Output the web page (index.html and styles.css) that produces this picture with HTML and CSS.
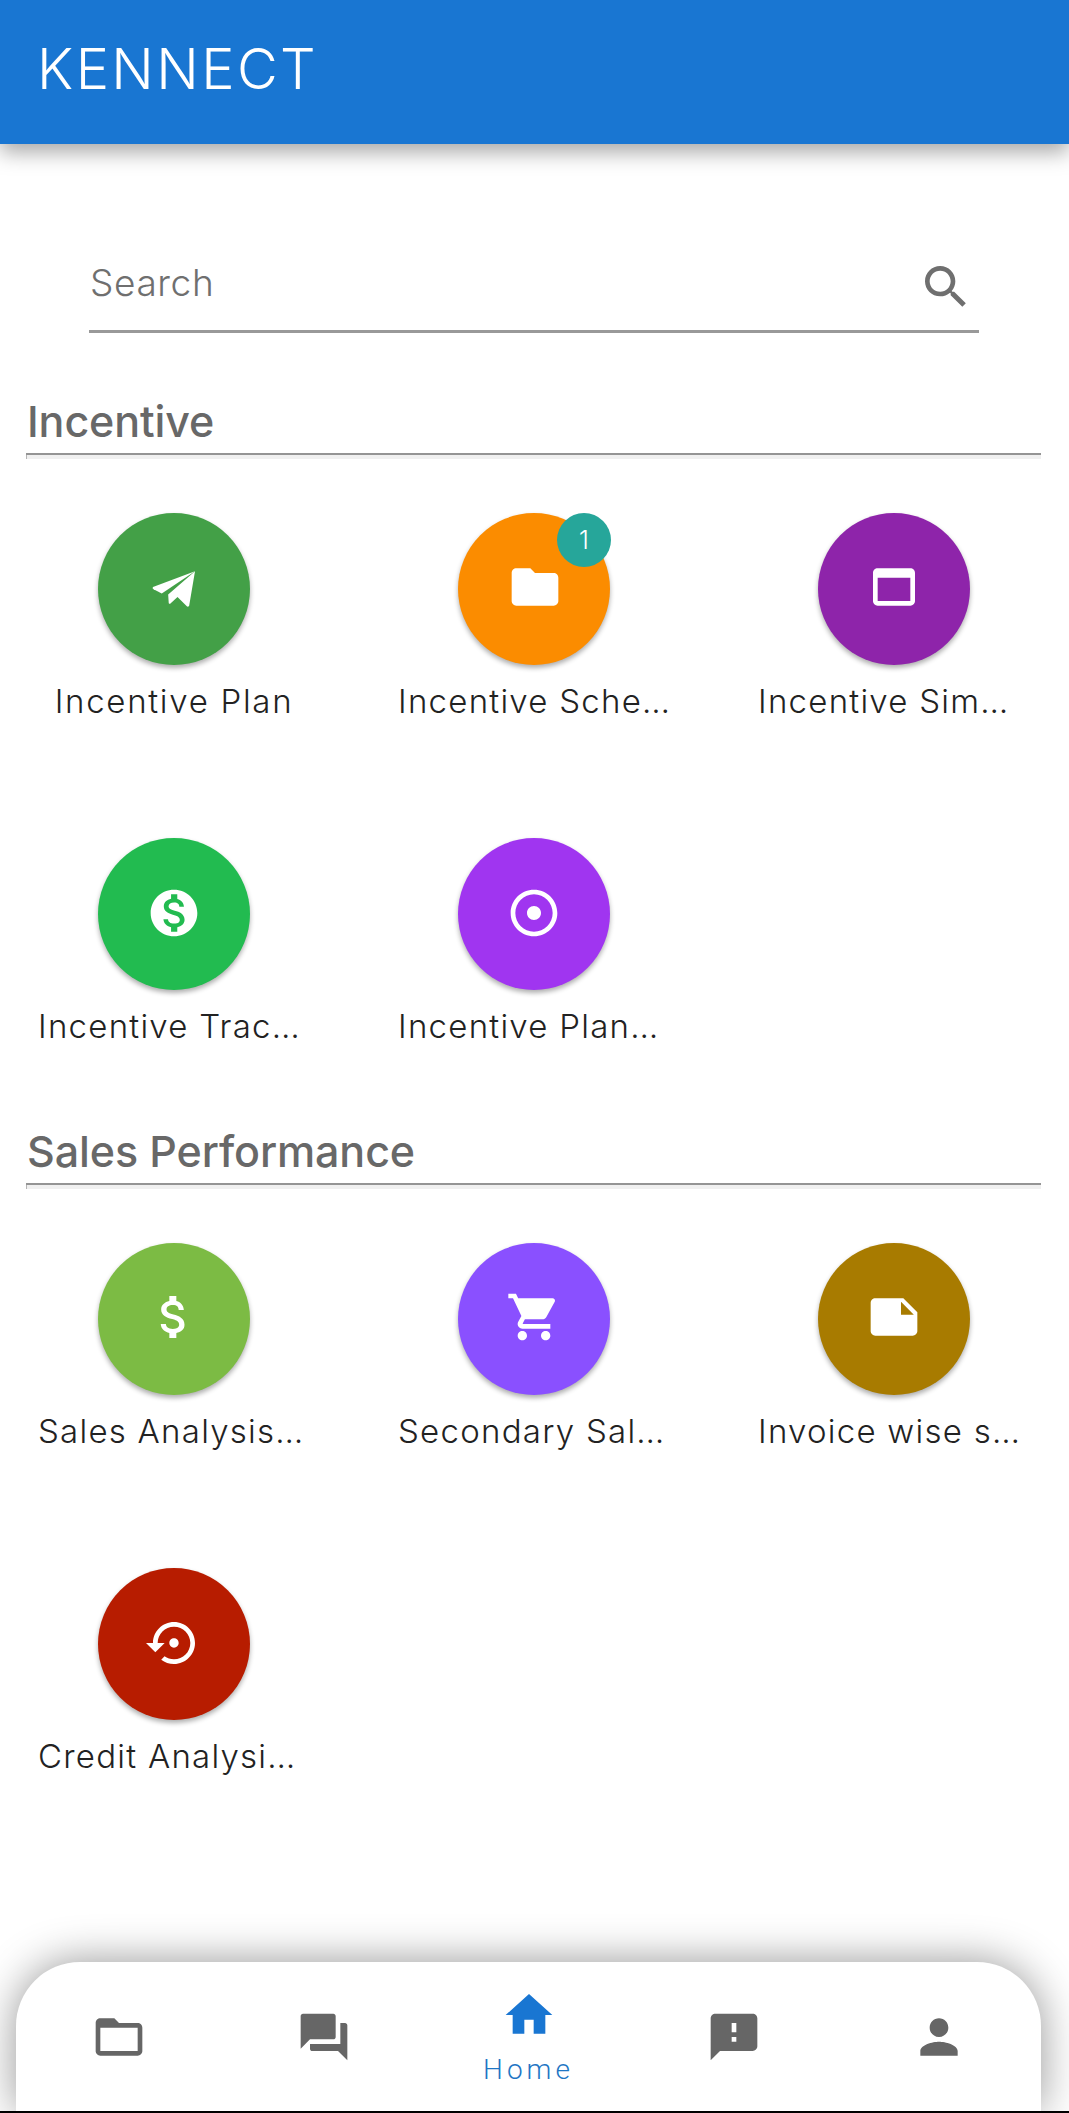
FILE: index.html
```html
<!DOCTYPE html>
<html lang="en">
<head>
<meta charset="utf-8">
<title>KENNECT</title>
<link rel="stylesheet" href="styles.css">
</head>
<body>
<header class="appbar"><h1 class="brand">KENNECT</h1></header>
<main class="content">
  <div class="search">
    <span class="search-text">Search</span>
    <svg class="search-icon" viewBox="0 0 24 24"><path d="M15.5 14h-.79l-.28-.27C15.41 12.59 16 11.11 16 9.5 16 5.91 13.09 3 9.5 3S3 5.91 3 9.5 5.91 16 9.5 16c1.61 0 3.09-.59 4.23-1.57l.27.28v.79l5 4.99L20.49 19l-4.99-5zm-6 0C7.01 14 5 11.99 5 9.5S7.01 5 9.5 5 14 7.01 14 9.5 11.99 14 9.5 14z"/></svg>
  </div>

  <section class="section">
    <h2 class="section-title">Incentive</h2>
    <div class="grid">
      <div class="tile">
        <div class="disc c-green"><svg class="glyph" viewBox="0 0 48 48"><path d="M42 10.500 6 24Q5 25 6.500 26L13.500 29.500Z"/><path d="M42 10.500 37 40Q36 41.500 35 40.500L27 32.500 20.500 38.500 19.500 38 19 30.500Z"/></svg></div>
        <div class="label label-center">Incentive Plan</div>
      </div>
      <div class="tile">
        <div class="disc c-orange"><svg class="glyph glyph-nudge" viewBox="0 0 24 24"><path d="M10 4H4c-1.1 0-1.99.9-1.99 2L2 18c0 1.1.9 2 2 2h16c1.1 0 2-.9 2-2V8c0-1.1-.9-2-2-2h-8l-2-2z"/></svg><span class="badge">1</span></div>
        <div class="label">Incentive Sche…</div>
      </div>
      <div class="tile">
        <div class="disc c-purple"><svg class="glyph" viewBox="0 0 24 24"><path d="M19 4H5c-1.11 0-2 .9-2 2v12c0 1.1.89 2 2 2h14c1.1 0 2-.9 2-2V6c0-1.1-.89-2-2-2zm0 14H5V8h14v10z"/></svg></div>
        <div class="label">Incentive Sim…</div>
      </div>
      <div class="tile">
        <div class="disc c-emerald"><svg class="glyph" viewBox="0 0 24 24"><path d="M12 2C6.48 2 2 6.48 2 12s4.48 10 10 10 10-4.48 10-10S17.52 2 12 2zm1.41 16.09V20h-2.67v-1.93c-1.71-.36-3.16-1.46-3.27-3.4h1.96c.1 1.05.82 1.87 2.65 1.87 1.96 0 2.4-.98 2.4-1.59 0-.83-.44-1.61-2.67-2.14-2.48-.6-4.18-1.62-4.18-3.67 0-1.72 1.39-2.84 3.11-3.21V4h2.67v1.95c1.86.45 2.79 1.86 2.85 3.39H14.3c-.05-1.11-.64-1.87-2.22-1.87-1.5 0-2.4.68-2.4 1.64 0 .84.65 1.39 2.67 1.91s4.18 1.39 4.18 3.91c-.01 1.83-1.38 2.83-3.12 3.16z"/></svg></div>
        <div class="label">Incentive Trac…</div>
      </div>
      <div class="tile">
        <div class="disc c-violet"><svg class="glyph" viewBox="0 0 24 24"><path d="M12 2C6.49 2 2 6.49 2 12s4.49 10 10 10 10-4.49 10-10S17.51 2 12 2zm0 18c-4.41 0-8-3.59-8-8s3.59-8 8-8 8 3.59 8 8-3.59 8-8 8zm3-8c0 1.66-1.34 3-3 3s-3-1.34-3-3 1.34-3 3-3 3 1.34 3 3z"/></svg></div>
        <div class="label">Incentive Plan…</div>
      </div>
    </div>
  </section>

  <section class="section">
    <h2 class="section-title">Sales Performance</h2>
    <div class="grid">
      <div class="tile">
        <div class="disc c-lime"><svg class="glyph" viewBox="0 0 24 24"><path d="M11.8 10.9c-2.27-.59-3-1.2-3-2.15 0-1.09 1.01-1.85 2.7-1.85 1.78 0 2.44.85 2.5 2.1h2.21c-.07-1.72-1.12-3.3-3.21-3.81V3h-3v2.16c-1.94.42-3.5 1.68-3.5 3.61 0 2.31 1.91 3.46 4.7 4.13 2.5.6 3 1.48 3 2.41 0 .69-.49 1.79-2.7 1.79-2.06 0-2.87-.92-2.98-2.1h-2.2c.12 2.19 1.76 3.42 3.68 3.83V21h3v-2.15c1.95-.37 3.5-1.5 3.5-3.55 0-2.84-2.43-3.81-4.7-4.4z"/></svg></div>
        <div class="label">Sales Analysis…</div>
      </div>
      <div class="tile">
        <div class="disc c-indigo"><svg class="glyph" viewBox="0 0 24 24"><path d="M7 18c-1.1 0-1.99.9-1.99 2S5.9 22 7 22s2-.9 2-2-.9-2-2-2zM1 2v2h2l3.6 7.59-1.35 2.45c-.16.28-.25.61-.25.96 0 1.1.9 2 2 2h12v-2H7.42c-.14 0-.25-.11-.25-.25l.03-.12.9-1.63h7.45c.75 0 1.41-.41 1.75-1.03l3.58-6.49c.08-.14.12-.31.12-.48 0-.55-.45-1-1-1H5.21l-.94-2H1zm16 16c-1.1 0-1.99.9-1.99 2s.89 2 1.99 2 2-.9 2-2-.9-2-2-2z"/></svg></div>
        <div class="label">Secondary Sal…</div>
      </div>
      <div class="tile">
        <div class="disc c-gold"><svg class="glyph" viewBox="0 0 24 24"><path d="M22 10l-6-6H4c-1.1 0-2 .9-2 2v12.01c0 1.1.9 1.99 2 1.99l16-.01c1.1 0 2-.89 2-1.99v-8zm-7-4.5l5.5 5.5H15V5.5z"/></svg></div>
        <div class="label">Invoice wise s…</div>
      </div>
      <div class="tile">
        <div class="disc c-red"><svg class="glyph" viewBox="0 0 24 24"><path d="M14 12c0-1.1-.9-2-2-2s-2 .9-2 2 .9 2 2 2 2-.9 2-2zm-2-9c-4.97 0-9 4.03-9 9H0l4 4 4-4H5c0-3.87 3.13-7 7-7s7 3.13 7 7-3.13 7-7 7c-1.51 0-2.91-.49-4.06-1.3l-1.42 1.44C8.04 20.3 9.94 21 12 21c4.97 0 9-4.03 9-9s-4.03-9-9-9z"/></svg></div>
        <div class="label">Credit Analysi…</div>
      </div>
    </div>
  </section>
</main>
<nav class="tabbar">
  <div class="tab"><svg class="tab-icon" viewBox="0 0 24 24"><path d="M20 6h-8l-2-2H4c-1.1 0-1.99.9-1.99 2L2 18c0 1.1.9 2 2 2h16c1.1 0 2-.9 2-2V8c0-1.1-.9-2-2-2zm0 12H4V8h16v10z"/></svg></div>
  <div class="tab"><svg class="tab-icon" viewBox="0 0 24 24"><path d="M21 6h-2v9H6v2c0 .55.45 1 1 1h11l4 4V7c0-.55-.45-1-1-1zm-4 6V3c0-.55-.45-1-1-1H3c-.55 0-1 .45-1 1v14l4-4h10c.55 0 1-.45 1-1z"/></svg></div>
  <div class="tab tab-active"><svg class="tab-icon" viewBox="0 0 24 24"><path d="M10 20v-6h4v6h5v-8h3L12 3 2 12h3v8z"/></svg><span class="tab-label">Home</span></div>
  <div class="tab"><svg class="tab-icon" viewBox="0 0 24 24"><path d="M20 2H4c-1.1 0-1.99.9-1.99 2L2 22l4-4h14c1.1 0 2-.9 2-2V4c0-1.1-.9-2-2-2zm-7 12h-2v-2h2v2zm0-4h-2V6h2v4z"/></svg></div>
  <div class="tab"><svg class="tab-icon" viewBox="0 0 24 24"><path d="M12 12c2.21 0 4-1.79 4-4s-1.79-4-4-4-4 1.79-4 4 1.79 4 4 4zm0 2c-2.67 0-8 1.34-8 4v2h16v-2c0-2.66-5.33-4-8-4z"/></svg></div>
</nav>
<div class="edge"></div>
</body>
</html>
```
FILE: styles.css
```css
* { box-sizing: border-box; }
html, body { margin: 0; padding: 0; }
body {
  width: 1069px;
  height: 2113px;
  overflow: hidden;
  display: flex;
  flex-direction: column;
  background: #fff;
  font-family: "Inter", "Liberation Sans", sans-serif;
}
.appbar {
  height: 144px;
  flex: none;
  background: #1976d2;
  box-shadow: 0 8px 20px rgba(0,0,0,.35);
  display: flex;
  align-items: center;
  padding: 0 0 7px 37px;
  position: relative;
  z-index: 2;
}
.brand {
  margin: 0;
  font-size: 56px;
  font-weight: 300;
  color: #fff;
  line-height: 1;
  letter-spacing: 2.4px;
}
.content { flex: 1; min-height: 0; }
.search {
  margin: 104px 90px 37px 89px;
  height: 85px;
  border-bottom: 3px solid #999;
  display: flex;
  align-items: center;
  justify-content: space-between;
  padding: 0 5px 0 1px;
}
.search-text { font-size: 37px; font-weight: 300; color: #6f6f6f; letter-spacing: .6px; margin-bottom: 13px; }
.search-icon { width: 56px; height: 56px; fill: #6f6f6f; margin-bottom: 5px; }
.section { padding-top: 25px; }
.section-title {
  position: relative;
  margin: 0 28px 0 26px;
  height: 60px;
  border-bottom: 2px solid #949494;
  font-size: 43px;
  font-weight: 500;
  line-height: 52px;
  letter-spacing: -.1px;
  color: #686868;
  padding-left: 1px;
}
.section-title::after {
  content: "";
  position: absolute;
  left: 0;
  right: 0;
  top: 100%;
  height: 4px;
  margin-top: 2px;
  background: #f0f0f0;
  border-left: 1px solid #b5b5b5;
}
.grid {
  display: grid;
  grid-template-columns: repeat(3, 272px);
  column-gap: 88px;
  row-gap: 63.5px;
  padding: 57.5px 0 0 38px;
}
.tile { height: 262px; display: flex; flex-direction: column; align-items: center; }
.disc {
  position: relative;
  width: 152px;
  height: 152px;
  flex: none;
  border-radius: 50%;
  display: flex;
  align-items: center;
  justify-content: center;
  box-shadow: 0 3px 5px rgba(0,0,0,.32);
}
.glyph { width: 56px; height: 56px; fill: #fff; margin-bottom: 3px; }
.glyph-nudge { margin-left: 2px; }
.c-green { background: #43a047; }
.c-orange { background: #fb8c00; }
.c-purple { background: #8e24aa; }
.c-emerald { background: #22bb50; }
.c-violet { background: #a035f0; }
.c-lime { background: #7cbb44; }
.c-indigo { background: #8a50ff; }
.c-gold { background: #a87b00; }
.c-red { background: #b71c00; }
.badge {
  position: absolute;
  top: 0;
  right: -1px;
  width: 54px;
  height: 54px;
  border-radius: 50%;
  background: #26a69a;
  color: #fff;
  font-size: 25px;
  font-weight: 300;
  display: flex;
  align-items: center;
  justify-content: center;
}
.label {
  align-self: stretch;
  margin-top: 13px;
  font-size: 33px;
  font-weight: 300;
  line-height: 46px;
  white-space: nowrap;
  color: #222;
  letter-spacing: 1.25px;
}
.label-center { text-align: center; letter-spacing: 1.7px; }
.tabbar {
  flex: none;
  height: 149px;
  margin: 0 28px 0 16px;
  border-radius: 64px 64px 0 0;
  background: #fff;
  box-shadow: 0 0 44px rgba(0,0,0,.42);
  display: flex;
  position: relative;
  z-index: 1;
}
.tab { flex: 1; display: flex; flex-direction: column; align-items: center; padding-top: 47px; }
.tab-icon { width: 56px; height: 56px; fill: #666; }
.tab-active { padding-top: 25px; }
.tab-active .tab-icon { fill: #1976d2; }
.tab-label {
  font-family: "Roboto", sans-serif;
  font-size: 28px;
  font-weight: 300;
  line-height: 54px;
  letter-spacing: 4px;
  color: #1f76c4;
}
.edge { flex: none; height: 2px; background: #000; position: relative; z-index: 2; }
```
